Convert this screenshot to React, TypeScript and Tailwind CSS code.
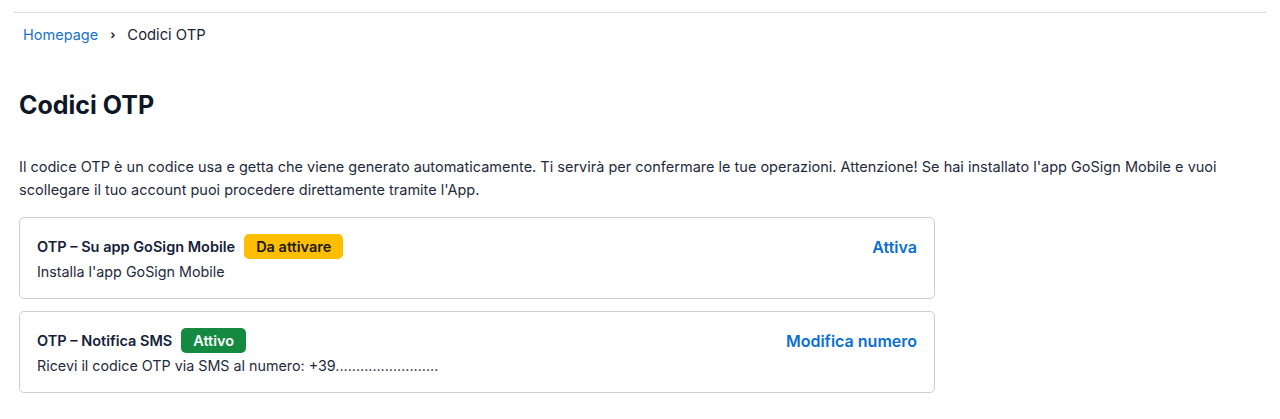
import React from 'react';

type OtpMethod = {
  title: string;
  badge: string;
  badgeClass: string;
  description: string;
  action: string;
};

const methods: OtpMethod[] = [
  {
    title: 'OTP – Su app GoSign Mobile',
    badge: 'Da attivare',
    badgeClass: 'bg-[#ffbe00] text-[#1a1a1a]',
    description: "Installa l'app GoSign Mobile",
    action: 'Attiva',
  },
  {
    title: 'OTP – Notifica SMS',
    badge: 'Attivo',
    badgeClass: 'bg-[#138a3f] text-white',
    description: 'Ricevi il codice OTP via SMS al numero: +39.........................',
    action: 'Modifica numero',
  },
];

function OtpCard({ method }: { method: OtpMethod }) {
  return (
    <div className="flex items-start justify-between rounded-[5px] border border-[#cfcfcf] bg-white px-[17px] pt-[16px] pb-[15px]">
      <div>
        <div className="flex items-center gap-[9px]">
          <span className="text-[14.5px] font-semibold text-[#15213a]">{method.title}</span>
          <span className={`flex h-[25px] items-center rounded-[5px] px-[12px] text-[14.5px] font-semibold ${method.badgeClass}`}>
            {method.badge}
          </span>
        </div>
        <p className="mt-[2px] text-[14.3px] leading-[22px] text-[#1f2a3d]">{method.description}</p>
      </div>
      <a className="mt-[1px] text-[16px] font-semibold text-[#0b6fd1]">{method.action}</a>
    </div>
  );
}

export default function App() {
  return (
    <div className="min-h-screen bg-white px-[14px] pt-[12px]" style={{ fontFamily: 'Inter, sans-serif' }}>
      <div className="border-t border-[#cfdde6]">
        <div className="px-[5px]">
          {/* Breadcrumb */}
          <nav className="mt-[12px] flex items-center pl-[4px] text-[14.5px] leading-[20px]">
            <a className="text-[#1a73c9]">Homepage</a>
            <span className="mx-[12px] text-[12px] font-bold text-[#1b2333]">›</span>
            <span className="text-[14.8px] text-[#1b2333]">Codici OTP</span>
          </nav>

          <h1 className="mt-[44px] text-[25px] font-bold leading-[32px] text-[#0e1726]">Codici OTP</h1>

          <p className="mt-[34px] max-w-[1200px] text-[14.5px] leading-[23px] text-[#1f2a3d]">
            Il codice OTP è un codice usa e getta che viene generato automaticamente. Ti servirà per confermare le tue operazioni. Attenzione! Se hai installato l'app GoSign Mobile e vuoi scollegare il tuo account puoi procedere direttamente tramite l'App.
          </p>

          <div className="mt-[16px] flex w-[916px] flex-col gap-[12px]">
            {methods.map((m) => (
              <OtpCard key={m.title} method={m} />
            ))}
          </div>
        </div>
      </div>
    </div>
  );
}
